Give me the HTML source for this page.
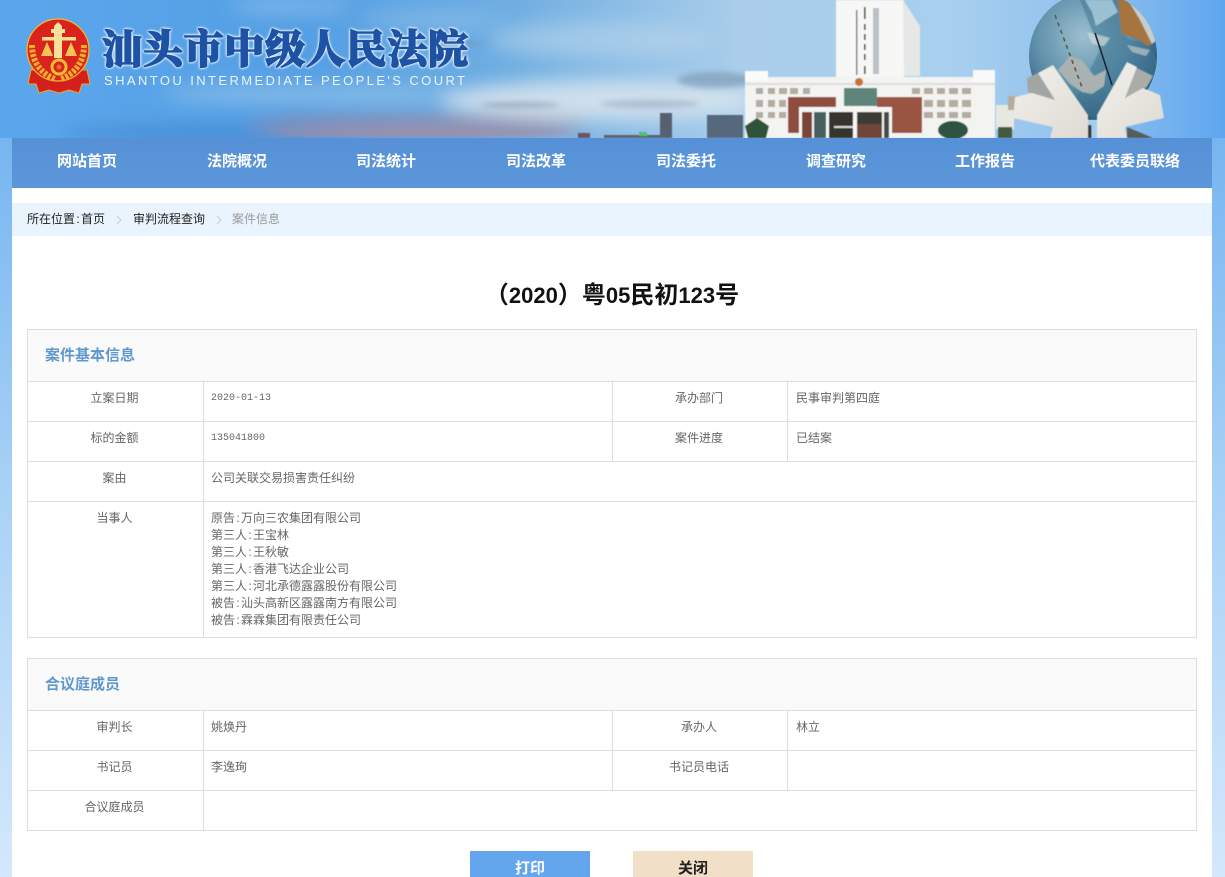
<!DOCTYPE html>
<html lang="zh"><head><meta charset="utf-8"><title>案件信息</title>
<style>
html,body{margin:0;padding:0;width:1225px;height:877px;overflow:hidden}
body{position:relative;background:linear-gradient(#5fa7ea 0,#7db9f1 180px,#a9d2f6 500px,#d4e8fb 877px);font-family:"Liberation Sans","Noto Sans CJK SC",sans-serif;font-size:12px;color:#666}
div{position:absolute;white-space:nowrap}
#nav{left:12px;top:138px;width:1200px;height:50px;background:linear-gradient(#5690d6,#5c96da)}
.n{top:0;height:46px;line-height:47px;width:150px;text-align:center;color:#fff;font-size:15px;font-weight:700}
#main{left:12px;top:188px;width:1200px;height:689px;background:#fff}
#crumb{left:12px;top:203px;width:1200px;height:33px;background:#e9f4fe;line-height:33px;font-size:12px}
#crumb span{position:absolute;top:0;color:#222}
#title{left:12px;top:279px;width:1200px;text-align:center;font-size:24px;line-height:34px;font-weight:700;color:#111}
#title b{font-size:22px}
.b{background:#ddd}
.hb{background:#fafafa;left:28px;width:1168px;height:51px}
.ht{left:45px;font-size:15px;font-weight:700;color:#5f97cf;line-height:20px}
.t{line-height:17px;font-size:12px;color:#666}
.c{text-align:center}
i{display:inline-block;width:6px;text-align:center;font-style:normal}
.btn{top:851px;width:120px;height:26px;line-height:36px;text-align:center;font-size:15px;font-weight:700;overflow:hidden}
</style></head><body>
<svg style="position:absolute;left:0;top:0" width="1225" height="138" viewBox="0 0 1225 138">
<defs>
<linearGradient id="sky" x1="0" y1="0" x2="1" y2="0"><stop offset="0" stop-color="#5ba6ec"/><stop offset=".25" stop-color="#549fe4"/><stop offset=".42" stop-color="#70aee2"/><stop offset=".6" stop-color="#a9cdea"/><stop offset=".78" stop-color="#a8cfee"/><stop offset=".9" stop-color="#8cbfee"/><stop offset="1" stop-color="#5ea6ef"/></linearGradient>
<radialGradient id="globe" cx=".42" cy=".35" r=".75"><stop offset="0" stop-color="#9cc0cf"/><stop offset=".5" stop-color="#5f90aa"/><stop offset=".85" stop-color="#2d5877"/><stop offset="1" stop-color="#1a3a54"/></radialGradient>
<linearGradient id="st" x1="0" y1="0" x2="1" y2="1"><stop offset="0" stop-color="#f2f0eb"/><stop offset="1" stop-color="#dedbd4"/></linearGradient>
<filter id="b8" x="-30%" y="-100%" width="160%" height="300%"><feGaussianBlur stdDeviation="9"/></filter>
<filter id="b3" x="-30%" y="-100%" width="160%" height="300%"><feGaussianBlur stdDeviation="3"/></filter>
<filter id="b1" x="-10%" y="-10%" width="120%" height="120%"><feGaussianBlur stdDeviation=".6"/></filter>
<clipPath id="cg"><circle cx="1093" cy="56" r="64"/></clipPath>
</defs>
<rect width="1225" height="138" fill="url(#sky)"/>
<g filter="url(#b8)">
<ellipse cx="290" cy="6" rx="60" ry="8" fill="#a8d0ee" opacity=".5"/>
<ellipse cx="430" cy="20" rx="70" ry="8" fill="#9cc8ea" opacity=".5"/>
<ellipse cx="310" cy="94" rx="150" ry="9" fill="#a8cfeb" opacity=".6"/>
<ellipse cx="600" cy="100" rx="160" ry="20" fill="#dbe6ee" opacity=".85"/>
<ellipse cx="600" cy="40" rx="110" ry="18" fill="#bcd7ec" opacity=".55"/>
<ellipse cx="200" cy="134" rx="140" ry="10" fill="#3f83cc" opacity=".6"/>
<ellipse cx="420" cy="126" rx="170" ry="10" fill="#9a8aa6" opacity=".9"/>
</g>
<g filter="url(#b3)">
<ellipse cx="520" cy="105" rx="40" ry="3" fill="#7e8ea4" opacity=".55"/>
<ellipse cx="650" cy="104" rx="50" ry="4" fill="#8fa2b8" opacity=".55"/>
<ellipse cx="450" cy="44" rx="35" ry="3" fill="#6f93b6" opacity=".5"/>
<ellipse cx="715" cy="80" rx="38" ry="8" fill="#7492ae" opacity=".6"/>
<ellipse cx="420" cy="132" rx="150" ry="4" fill="#a08fa6" opacity=".7"/>
</g>
<g filter="url(#b1)">
<rect x="660" y="113" width="12" height="25" fill="#57606f"/>
<rect x="707" y="115" width="36" height="23" fill="#55677b"/>
<rect x="578" y="133" width="12" height="5" fill="#6a5560"/>
<rect x="604" y="135" width="60" height="3" fill="#5d6470"/>
<rect x="639" y="132" width="8" height="4" fill="#4fc07a"/>
</g>
<g filter="url(#b1)">
<rect x="836" y="0" width="68" height="78" fill="#f7f7f5"/>
<polygon points="903,0 920,26 920,76 904,76" fill="#e6e8e8"/>
<rect x="873" y="8" width="6" height="66" fill="#b9c1c6"/><rect x="856" y="10" width="1.500" height="65" fill="#6e7a84"/>
<rect x="864" y="7" width="1.600" height="12" fill="#333"/><rect x="864" y="24" width="1.600" height="6" fill="#333"/><rect x="864" y="34" width="1.600" height="6" fill="#333"/><rect x="864" y="44" width="1.600" height="6" fill="#333"/><rect x="864" y="54" width="1.600" height="6" fill="#333"/><rect x="864" y="66" width="1.600" height="8" fill="#333"/>
<rect x="745" y="77" width="250" height="61" fill="#f3f3f1"/>
<rect x="745" y="71" width="23" height="10" fill="#fbfbf9"/><rect x="973" y="70" width="22" height="12" fill="#f9f9f7"/>
<rect x="745" y="83" width="250" height="2" fill="#dedede"/>
<g fill="#b3aca0"><rect x="756" y="88" width="7" height="6"/><rect x="768" y="88" width="7" height="6"/><rect x="779" y="88" width="8" height="6"/><rect x="790" y="88" width="8" height="6"/><rect x="803" y="88" width="7" height="6"/>
<rect x="756" y="100" width="7" height="7"/><rect x="768" y="100" width="7" height="7"/><rect x="779" y="100" width="7" height="7"/>
<rect x="756" y="112" width="7" height="6"/><rect x="768" y="112" width="7" height="6"/><rect x="779" y="112" width="7" height="6"/>
<rect x="912" y="88" width="8" height="6"/><rect x="924" y="88" width="9" height="6"/><rect x="937" y="88" width="8" height="6"/><rect x="949" y="88" width="9" height="6"/><rect x="962" y="88" width="9" height="6"/>
<rect x="924" y="100" width="9" height="7"/><rect x="937" y="100" width="8" height="7"/><rect x="949" y="100" width="9" height="7"/><rect x="962" y="100" width="9" height="7"/>
<rect x="924" y="112" width="9" height="6"/><rect x="937" y="112" width="8" height="6"/><rect x="949" y="112" width="9" height="6"/><rect x="962" y="112" width="9" height="6"/></g>
<rect x="788" y="97" width="48" height="36" fill="#8f4d3c"/><rect x="877" y="97" width="45" height="36" fill="#9a5542"/>
<rect x="844" y="88" width="33" height="18" fill="#5f8479"/>
<circle cx="859" cy="82" r="4" fill="#c9703c"/>
<rect x="799" y="107" width="93" height="31" fill="#f5f5f3"/>
<rect x="802" y="112" width="10" height="26" fill="#7a4436"/><rect x="814" y="112" width="12" height="26" fill="#44615d"/><rect x="829" y="112" width="24" height="26" fill="#34342f"/><rect x="857" y="112" width="25" height="26" fill="#3e3a34"/><rect x="857" y="124" width="25" height="14" fill="#6e4638"/><rect x="884" y="112" width="5" height="26" fill="#444c4a"/>
<rect x="834" y="126" width="19" height="2" fill="#d8d8d8"/>
<rect x="765" y="133" width="34" height="5" fill="#f3f3f1"/><rect x="892" y="133" width="45" height="5" fill="#f3f3f1"/>
<path d="M745 126L757 118 769 126 766 138H748Z" fill="#2f5238"/>
<ellipse cx="953" cy="130" rx="15" ry="9" fill="#2f5340"/>
<rect x="996" y="105" width="18" height="24" fill="#e8e8e2"/><rect x="1008" y="96" width="14" height="14" fill="#b9aaa0"/><rect x="998" y="127" width="14" height="11" fill="#45583f"/>
</g>
<circle cx="1093" cy="56" r="64" fill="url(#globe)"/>
<g clip-path="url(#cg)" filter="url(#b1)">
<path d="M1080 0H1118L1125 20 1122 33 1130 40 1145 42 1157 60 1157 75 1125 100 1093 120 1075 100 1100 50Z" fill="#3e7494" opacity=".55"/>
<path d="M1118 0H1128L1140 20 1152 44 1148 46 1136 38 1122 34 1120 22Z" fill="#a5753d"/>
<path d="M1128 0H1140L1157 40 1152 44 1140 20Z" fill="#c7cdca"/>
<path d="M1085 0L1112 0 1118 12 1105 20 1096 26 1092 12Z" fill="#a6cddb" opacity=".85"/>
<path d="M1058 70L1070 56 1082 60 1094 76 1106 70 1104 86 1092 94 1082 92 1070 84Z" fill="#a9b2b1"/>
<path d="M1087 32L1110 38 1104 46 1092 44Z" fill="#cfdcdc" opacity=".7"/>
<path d="M1127 45L1150 50 1146 56 1132 52Z" fill="#b9c8ca" opacity=".7"/>
</g>
<path d="M1095 33L1112 85" stroke="#1d2a33" stroke-width="1.600" fill="none"/>
<path d="M1055 15L1083 90" stroke="#5d574b" stroke-width="1.600" stroke-dasharray="4 4" fill="none"/>
<g filter="url(#b1)">
<polygon points="1027,78 1038,73 1055,100 1040,98 1028,92" fill="#a3a5a2"/>
<polygon points="1038,73 1053,65 1088,115 1088,138 1050,138 1053,127 1013,118 1015,97 1032,93 1055,100" fill="url(#st)"/>
<polygon points="1135,67 1153,76 1147,87 1125,98" fill="#aaaca8"/>
<polygon points="1127,62 1137,67 1125,98 1143,88 1160,95 1164,118 1125,127 1127,138 1097,138 1097,115" fill="url(#st)"/>
<rect x="1088" y="120" width="9" height="18" fill="#a3cef0"/><rect x="1088" y="125" width="3.500" height="13" fill="#31393d"/>
<polygon points="1127,127 1153,138 1127,138" fill="#565c5c"/>
</g>
<path d="M31 70L28 84 36 84 39 93 49 90 59 93 69 90 79 93 82 84 90 84 87 70Z" fill="#d3201c" stroke="#eea820" stroke-width="1"/>
<circle cx="58" cy="50" r="31" fill="#d9231c" stroke="#f6b92e" stroke-width="1.200"/>
<path d="M32 45C32 63 42 74 55 79M84 45C84 63 74 74 61 79" stroke="#eead2c" stroke-width="6" stroke-dasharray="3 1.500" fill="none"/>
<path d="M54 26L58 22 62 26V29H65V33H62V58H54V33H51V29H54Z" fill="#f8e19a"/>
<rect x="42" y="37" width="34" height="3.500" fill="#f7e18f"/>
<polygon points="41,56 47,42 53,56" fill="#f3c655"/><polygon points="65,56 71,42 77,56" fill="#f3c655"/>
<circle cx="59" cy="67" r="7" fill="#d9231c" stroke="#f4bb35" stroke-width="3"/><circle cx="59" cy="67" r="2.500" fill="#e96a2d"/>
<text x="102" y="63" font-family="'Noto Serif CJK SC',serif" font-weight="900" font-size="40" textLength="366" lengthAdjust="spacing" fill="#1d52a4" stroke="#1d52a4" stroke-width="1.300" style="filter:drop-shadow(0 0 1px #fff) drop-shadow(0 0 1px #fff)">汕头市中级人民法院</text>
<text x="104" y="85" font-family="'Liberation Sans',sans-serif" font-size="13" textLength="361" lengthAdjust="spacing" fill="#eaf4fc">SHANTOU INTERMEDIATE PEOPLE'S COURT</text>
</svg>
<div id="main"></div>
<div id="nav">
<div class="n" style="left:0">网站首页</div><div class="n" style="left:150px">法院概况</div><div class="n" style="left:299px">司法统计</div><div class="n" style="left:449px">司法改革</div><div class="n" style="left:599px">司法委托</div><div class="n" style="left:749px">调查研究</div><div class="n" style="left:898px">工作报告</div><div class="n" style="left:1048px">代表委员联络</div>
</div>
<div id="crumb"><span style="left:15px">所在位置<i>:</i>首页</span>
<svg style="position:absolute;left:104px;top:12px" width="6" height="10"><path d="M1 1L5 5 1 9" stroke="#ccc" fill="none"/></svg>
<span style="left:121px">审判流程查询</span>
<svg style="position:absolute;left:204px;top:12px" width="6" height="10"><path d="M1 1L5 5 1 9" stroke="#ccc" fill="none"/></svg>
<span style="left:220px;color:#999">案件信息</span></div>
<div id="title">（<b>2020</b>）粤<b>05</b>民初<b>123</b>号</div>

<div class="hb" style="top:330px"></div>
<div class="b" style="left:27px;top:329px;width:1170px;height:1px"></div>
<div class="b" style="left:27px;top:381px;width:1170px;height:1px"></div>
<div class="b" style="left:27px;top:421px;width:1170px;height:1px"></div>
<div class="b" style="left:27px;top:461px;width:1170px;height:1px"></div>
<div class="b" style="left:27px;top:501px;width:1170px;height:1px"></div>
<div class="b" style="left:27px;top:637px;width:1170px;height:1px"></div>
<div class="b" style="left:27px;top:329px;width:1px;height:309px"></div>
<div class="b" style="left:1196px;top:329px;width:1px;height:309px"></div>
<div class="b" style="left:203px;top:381px;width:1px;height:256px"></div>
<div class="b" style="left:612px;top:381px;width:1px;height:80px"></div>
<div class="b" style="left:787px;top:381px;width:1px;height:80px"></div>
<div class="ht" style="top:346px">案件基本信息</div>
<div class="t c" style="left:27px;width:175px;top:390px">立案日期</div><div class="t" style="left:211px;top:390px;font-family:'Liberation Mono','Noto Sans CJK SC',monospace;font-size:10px">2020-01-13</div>
<div class="t c" style="left:612px;width:174px;top:390px">承办部门</div><div class="t" style="left:796px;top:390px">民事审判第四庭</div>
<div class="t c" style="left:27px;width:175px;top:430px">标的金额</div><div class="t" style="left:211px;top:430px;font-family:'Liberation Mono','Noto Sans CJK SC',monospace;font-size:10px">135041800</div>
<div class="t c" style="left:612px;width:174px;top:430px">案件进度</div><div class="t" style="left:796px;top:430px">已结案</div>
<div class="t c" style="left:27px;width:175px;top:470px">案由</div><div class="t" style="left:211px;top:470px">公司关联交易损害责任纠纷</div>
<div class="t c" style="left:27px;width:175px;top:510px">当事人</div>
<div class="t" style="left:211px;top:510px">原告<i>:</i>万向三农集团有限公司<br>第三人<i>:</i>王宝林<br>第三人<i>:</i>王秋敏<br>第三人<i>:</i>香港飞达企业公司<br>第三人<i>:</i>河北承德露露股份有限公司<br>被告<i>:</i>汕头高新区露露南方有限公司<br>被告<i>:</i>霖霖集团有限责任公司</div>

<div class="hb" style="top:659px"></div>
<div class="b" style="left:27px;top:658px;width:1170px;height:1px"></div>
<div class="b" style="left:27px;top:710px;width:1170px;height:1px"></div>
<div class="b" style="left:27px;top:750px;width:1170px;height:1px"></div>
<div class="b" style="left:27px;top:790px;width:1170px;height:1px"></div>
<div class="b" style="left:27px;top:830px;width:1170px;height:1px"></div>
<div class="b" style="left:27px;top:658px;width:1px;height:173px"></div>
<div class="b" style="left:1196px;top:658px;width:1px;height:173px"></div>
<div class="b" style="left:203px;top:710px;width:1px;height:120px"></div>
<div class="b" style="left:612px;top:710px;width:1px;height:80px"></div>
<div class="b" style="left:787px;top:710px;width:1px;height:80px"></div>
<div class="ht" style="top:675px">合议庭成员</div>
<div class="t c" style="left:27px;width:175px;top:719px">审判长</div><div class="t" style="left:211px;top:719px">姚焕丹</div>
<div class="t c" style="left:612px;width:174px;top:719px">承办人</div><div class="t" style="left:796px;top:719px">林立</div>
<div class="t c" style="left:27px;width:175px;top:759px">书记员</div><div class="t" style="left:211px;top:759px">李逸珣</div>
<div class="t c" style="left:612px;width:174px;top:759px">书记员电话</div>
<div class="t c" style="left:27px;width:175px;top:799px">合议庭成员</div>
<div class="btn" style="left:470px;background:#63a6ee;color:#fff">打印</div>
<div class="btn" style="left:633px;background:#f2dfc8;color:#222">关闭</div>
</body></html>
